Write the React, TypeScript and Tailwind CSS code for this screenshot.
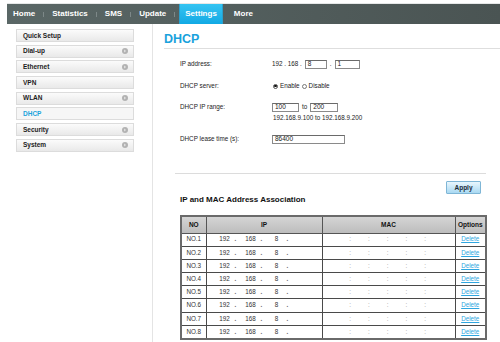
import React from "react";

const navItems = ["Home", "Statistics", "SMS", "Update"];
const sideItems: { label: string; icon: boolean; active?: boolean }[] = [
  { label: "Quick Setup", icon: false },
  { label: "Dial-up", icon: true },
  { label: "Ethernet", icon: true },
  { label: "VPN", icon: false },
  { label: "WLAN", icon: true },
  { label: "DHCP", icon: false, active: true },
  { label: "Security", icon: true },
  { label: "System", icon: true },
];

function CircleIcon() {
  return (
    <svg width="6" height="6" viewBox="0 0 6 6">
      <circle cx="3" cy="3" r="3" fill="#b2b2b2" />
      <path d="M2.3 1.6 L3.9 3 L2.3 4.4 Z" fill="#f2f2f2" />
    </svg>
  );
}

function Sep() {
  return <div className="w-px h-[5px] bg-[#7d8888]" />;
}

function Input({ w, value }: { w: string; value: string }) {
  return (
    <div
      className={`${w} h-[9px] border border-[#8a8a8a] border-t-[#6a6a6a] bg-white flex items-center pl-[2px] text-[6.5px] leading-none text-[#222]`}
    >
      {value}
    </div>
  );
}

export default function App() {
  const rows = [1, 2, 3, 4, 5, 6, 7, 8];
  return (
    <div className="w-[500px] h-[342px] overflow-hidden bg-white font-['Liberation_Sans',Arial,sans-serif] text-[#222]">
      {/* top nav */}
      <div className="pt-[3px] pl-[7px]">
        <div className="h-px bg-[#e6e8e8]" />
        <div className="h-[20px] flex items-center bg-gradient-to-r from-[#5a6766] to-[#4a5453] text-white text-[8px] font-bold">
          {navItems.map((n, i) => (
            <React.Fragment key={n}>
              <div className={`${i === 0 ? "pl-[6px]" : "pl-[8px]"} pr-[8px]`}>{n}</div>
              <Sep />
            </React.Fragment>
          ))}
          <div className="ml-[4px] h-[20px] px-[5px] flex items-center bg-gradient-to-b from-[#34c4f2] to-[#10a9e4] border-x border-[#2aa0cc]">
            Settings
          </div>
          <div className="pl-[11px]">More</div>
        </div>
      </div>

      <div className="flex">
        {/* sidebar */}
        <div className="w-[153px] pl-[16px] pt-[5px] flex flex-col gap-[2.7px] border-r border-[#e4e4e4] h-[318px]">
          {sideItems.map((s) => (
            <div
              key={s.label}
              className={`w-[118px] h-[13px] flex items-center justify-between pl-[6px] pr-[5px] border border-[#dcdcdc] text-[6.5px] font-bold ${
                s.active
                  ? "bg-[#f6f6f6] text-[#1ba3dc]"
                  : "bg-gradient-to-b from-[#fbfbfb] to-[#e9e9e9] text-[#1c1c1c]"
              }`}
            >
              <span>{s.label}</span>
              {s.icon && <CircleIcon />}
            </div>
          ))}
        </div>

        {/* content */}
        <div className="flex-1 pl-[11px]">
          <div className="mt-[7.5px] pb-[2px] border-b border-[#dedede] text-[12.5px] leading-[14px] font-bold text-[#1aa2dc]">
            DHCP
          </div>

          <div className="pl-[16px] text-[6.3px] leading-none text-[#222]">
            {/* IP address */}
            <div className="mt-[10.5px] h-[10px] flex items-center">
              <div className="w-[92px]">IP address:</div>
              <span className="mr-[3px]">192 . 168 .</span>
              <Input w="w-[22px]" value="8" />
              <span className="mx-[3px]">.</span>
              <Input w="w-[25px]" value="1" />
            </div>
            {/* DHCP server */}
            <div className="mt-[12px] h-[10px] flex items-center">
              <div className="w-[93px]">DHCP server:</div>
              <span className="w-[5px] h-[5px] rounded-full border border-[#555] bg-white flex items-center justify-center">
                <span className="w-[2.4px] h-[2.4px] rounded-full bg-[#111]" />
              </span>
              <span className="ml-[2px]">Enable</span>
              <span className="ml-[2px] w-[5px] h-[5px] rounded-full border border-[#777] bg-white" />
              <span className="ml-[2px]">Disable</span>
            </div>
            {/* DHCP IP range */}
            <div className="mt-[11px] h-[10px] flex items-center">
              <div className="w-[92px]">DHCP IP range:</div>
              <Input w="w-[27px]" value="100" />
              <span className="mx-[3px]">to</span>
              <Input w="w-[28px]" value="200" />
            </div>
            <div className="mt-[2px] h-[8px] flex items-center pl-[93px]">
              192.168.9.100 to 192.168.9.200
            </div>
            {/* lease */}
            <div className="mt-[12px] h-[10px] flex items-center">
              <div className="w-[92px]">DHCP lease time (s):</div>
              <Input w="w-[73px]" value="86400" />
            </div>
          </div>

          {/* lower section */}
          <div className="ml-[11px] w-[311px] mt-[29px] border-t border-[#dcdcdc]">
            <div className="flex justify-end pr-[5px] mt-[7px]">
              <div className="w-[35px] h-[13px] flex items-center justify-center border border-[#7fb6d6] bg-gradient-to-b from-[#e9f6fd] to-[#a9d9f2] text-[6.5px] font-bold text-[#1d2b36] rounded-[1px]">
                Apply
              </div>
            </div>
            <div className="pl-[5px] mt-[1px] text-[8px] leading-[10px] font-bold text-[#111]">
              IP and MAC Address Association
            </div>
            <table className="ml-[5px] mt-[10px] w-[305px] table-fixed border-collapse border-2 border-[#6a6a6a] text-[6.3px] leading-none">
              <colgroup>
                <col className="w-[25px]" />
                <col className="w-[116px]" />
                <col className="w-[133px]" />
                <col className="w-[31px]" />
              </colgroup>
              <thead>
                <tr className="h-[17px] bg-gradient-to-b from-[#d6d6d6] to-[#bdbdbd] text-[6.5px] font-bold text-[#111]">
                  <th className="border border-[#555]">NO</th>
                  <th className="border border-[#555]">IP</th>
                  <th className="border border-[#555]">MAC</th>
                  <th className="border border-[#555]">Options</th>
                </tr>
              </thead>
              <tbody>
                {rows.map((r) => (
                  <tr key={r} className="h-[13.2px] bg-white">
                    <td className="border border-[#4a4a4a] text-center text-[#333] p-0">NO.{r}</td>
                    <td className="border border-[#4a4a4a] p-0">
                      <div className="flex items-center pl-[8px] text-[#333]">
                        {["192", "168", "8", ""].map((o, i) => (
                          <div key={i} className="flex items-center w-[26px]">
                            <span className="w-[20px] text-center">{o}</span>
                            {i < 3 && <span className="text-[#666] font-bold">.</span>}
                          </div>
                        ))}
                      </div>
                    </td>
                    <td className="border border-[#4a4a4a] p-0">
                      <div className="flex items-center justify-center gap-[17px] text-[#999] pr-[2px]">
                        {[0, 1, 2, 3, 4].map((c) => (
                          <span key={c}>:</span>
                        ))}
                      </div>
                    </td>
                    <td className="border border-[#4a4a4a] text-center p-0">
                      <span className="text-[#2fa6e0] underline">Delete</span>
                    </td>
                  </tr>
                ))}
              </tbody>
            </table>
          </div>
        </div>
      </div>
    </div>
  );
}
